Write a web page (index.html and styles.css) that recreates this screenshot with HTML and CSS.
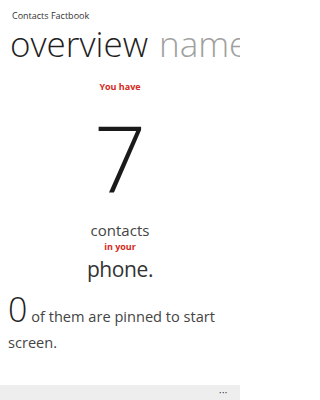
FILE: index.html
```html
<!DOCTYPE html>
<html>
<head>
<meta charset="utf-8">
<link rel="stylesheet" href="styles.css">
</head>
<body>
<div class="screen">
  <div class="title">Contacts Factbook</div>
  <div class="pivot"><span class="pv-active">overview</span><span class="pv-next">name</span></div>
  <div class="summary">
    <div class="red">You have</div>
    <div class="big">7</div>
    <div class="mid">contacts</div>
    <div class="red">in your</div>
    <div class="mid2">phone.</div>
  </div>
  <div class="pinned"><span class="zero">0</span> of them are pinned to start screen.</div>
  <div class="appbar"><span class="dots">•••</span></div>
</div>
</body>
</html>
```
FILE: styles.css
```css
html, body { margin: 0; padding: 0; background: #ffffff; width: 240px; overflow: hidden; }
.screen {
  width: 240px;
  height: 400px;
  display: flex;
  flex-direction: column;
  font-family: "Open Sans", "DejaVu Sans", sans-serif;
  color: #222;
  overflow: hidden;
}
.title {
  font-size: 9px;
  color: #333;
  padding: 9px 0 0 12px;
  line-height: 14px;
}
.pivot {
  white-space: nowrap;
  font-size: 35px;
  font-weight: 300;
  line-height: 36px;
  padding-left: 10px;
  margin-top: 3px;
}
.pv-active { color: #1f1f1f; }
.pv-next { color: #a0a0a0; margin-left: 11px; }
.summary {
  display: flex;
  flex-direction: column;
  align-items: center;
  margin-top: 19px;
}
.red {
  color: #d42a20;
  font-weight: bold;
  font-size: 9px;
  line-height: 12px;
}
.big {
  font-size: 92px;
  font-weight: 300;
  line-height: 110px;
  color: #1a1a1a;
  margin-top: 10px;
}
.mid {
  font-size: 15px;
  color: #444;
  line-height: 22px;
  margin-top: 6px;
}
.mid2 {
  font-size: 21px;
  color: #333;
  line-height: 26px;
  margin-top: 3px;
  letter-spacing: -0.4px;
}
.pinned {
  padding: 14px 8px 0 8px;
  font-size: 14.6px;
  color: #444;
  line-height: 26px;
}
.zero {
  font-size: 34px;
  font-weight: 300;
  color: #222;
  line-height: 26px;
}
.appbar {
  margin-top: auto;
  height: 15px;
  background: #eeeeee;
  display: flex;
  justify-content: flex-end;
  align-items: center;
  padding-right: 12px;
}
.dots {
  font-size: 5px;
  letter-spacing: 1px;
  color: #222;
}
```
